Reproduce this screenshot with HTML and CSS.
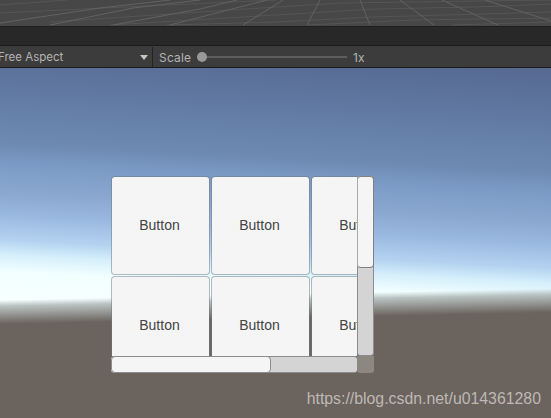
FILE: index.html
```html
<!DOCTYPE html>
<html lang="en">
<head>
<meta charset="utf-8">
<title>Game view</title>
<link rel="stylesheet" href="styles.css">
</head>
<body>
<div class="scene">
  <svg class="grid" width="551" height="26" viewBox="0 0 551 26" aria-hidden="true">
    <g class="grid-h">
      <path d="M0 5L67 0"/>
      <path d="M0 13L167 5L276 0"/>
      <path d="M50 22L276 7L342 3L551 0"/>
      <path d="M110 25L276 15L375 9L475 7L551 4"/>
      <path d="M167 25L276 22L375 17L482 14L551 12"/>
      <path d="M308 25L412 20L551 18"/>
      <path d="M452 25L551 22"/>
    </g>
    <g class="grid-v">
      <path d="M0 23L100 8L170 0"/>
      <path d="M50 25L133 8L200 0"/>
      <path d="M113 25L200 9L237 0"/>
      <path d="M170 25L267 0"/>
      <path d="M243 25L283 0"/>
      <path d="M307 25L320 0"/>
      <path d="M370 25L360 0"/>
      <path d="M434 25L400 0"/>
      <path d="M498 25L442 0"/>
      <path d="M551 21L485 0"/>
    </g>
  </svg>
</div>
<div class="tabbar"></div>
<div class="toolbar">
  <div class="aspect">
    <span class="aspect-label">Free Aspect</span>
    <span class="caret"></span>
  </div>
  <div class="scale">
    <span class="scale-label">Scale</span>
    <div class="slider"><span class="slider-knob"></span></div>
    <span class="scale-value">1x</span>
  </div>
</div>
<main class="game">
  <div class="scrollview">
    <div class="viewport">
      <div class="cells">
        <button class="cell">Button</button>
        <button class="cell">Button</button>
        <button class="cell">Button</button>
        <button class="cell">Button</button>
        <button class="cell">Button</button>
        <button class="cell">Button</button>
      </div>
    </div>
    <div class="vbar"><span class="vthumb"></span></div>
    <div class="hbar"><span class="hthumb"></span></div>
    <div class="corner"></div>
  </div>
  <span class="watermark">https://blog.csdn.net/u014361280</span>
</main>
</body>
</html>
```

FILE: styles.css
```css
* { box-sizing: border-box; }
html, body { margin: 0; height: 100%; }
body {
  width: 551px;
  height: 418px;
  overflow: hidden;
  display: flex;
  flex-direction: column;
  font-family: "Inter", "Liberation Sans", sans-serif;
  background: #282828;
}
.scene { flex: none; height: 27px; background: #474747; border-bottom: 1px solid #1f1f1f; }
.grid { display: block; }
.grid path { fill: none; stroke-width: 1; }
.grid-h path { stroke: #555555; }
.grid-v path { stroke: #626262; }
.tabbar { flex: none; height: 19px; background: #282828; border-bottom: 1px solid #1c1c1c; }
.toolbar {
  flex: none;
  height: 22px;
  display: flex;
  align-items: center;
  padding-top: 1px;
  background: #3c3c3c;
  border-bottom: 1px solid #1a1a1a;
  color: #b4b4b4;
  font-size: 12px;
  letter-spacing: 0.2px;
}
.aspect {
  width: 153px;
  height: 100%;
  display: flex;
  align-items: center;
  justify-content: space-between;
  padding-right: 4px;
  border-right: 1px solid #232323;
  overflow: hidden;
}
.aspect-label { margin-left: -2px; font-size: 11.500px; letter-spacing: 0; }
.caret {
  width: 0;
  height: 0;
  border-left: 4px solid transparent;
  border-right: 4px solid transparent;
  border-top: 5px solid #c4c4c4;
}
.scale { display: flex; align-items: center; padding-left: 6px; }
.scale-label { width: 38px; }
.slider { position: relative; width: 150px; height: 2px; background: #5e5e5e; }
.slider-knob {
  position: absolute;
  left: 0;
  top: -4px;
  width: 10px;
  height: 10px;
  border-radius: 50%;
  background: #999999;
}
.scale-value { margin-left: 6px; }
.game {
  flex: 1;
  position: relative;
  padding: 108px 0 0 111px;
  background:
    linear-gradient(178.800deg, rgba(107,99,94,0) 232px, rgba(160,170,168,0.7) 238px, #6b635e 256px),
    linear-gradient(183deg, #566a92 4px, #6d8ab3 104px, #7b9bc6 125px, #8aa8d0 154px, #99b8df 175px, #b4d2f0 200px, #d5effb 215px, #f2ffff 232px, #f7ffff 260px);
}
.scrollview {
  width: 263px;
  height: 198px;
  display: grid;
  grid-template-columns: 246px 17px;
  grid-template-rows: 180px 18px;
}
.viewport { overflow: hidden; }
.cells {
  width: 300px;
  display: grid;
  grid-template-columns: repeat(3, 97px);
  grid-auto-rows: 96.500px;
  gap: 3.500px 3px;
  padding: 1px 0 0 1px;
}
.cell {
  border: 0;
  padding: 0 2px 0 0;
  border-radius: 3px;
  background: #f5f5f5;
  color: #444444;
  font-family: "Liberation Sans", sans-serif;
  font-size: 14px;
  box-shadow: 0 0 0 1px rgba(110,120,125,0.5);
}
.vbar {
  height: 180px;
  background: #d4d4d4;
  border: 1px solid #8c8c8c;
  border-top: 0;
  border-radius: 3px;
}
.vthumb {
  display: block;
  height: 92px;
  margin: 0 -1px;
  background: #f5f5f5;
  border: 1px solid #808080;
  border-left-color: #aaaaaa;
  border-radius: 4px;
}
.hbar {
  height: 17px;
  background: #d4d4d4;
  border-top: 1px solid #8c8c8c;
  border-bottom: 1px solid #8c8c8c;
  border-radius: 3px;
}
.hthumb {
  display: block;
  width: 160px;
  height: 17px;
  margin-top: -1px;
  background: #f5f5f5;
  border: 1px solid #8c8c8c;
  border-radius: 4px;
}
.corner { height: 17px; background: #8d8781; border-radius: 0 0 3px 3px; }
.watermark {
  position: absolute;
  right: 10px;
  bottom: 10px;
  font-family: "Liberation Sans", sans-serif;
  font-size: 15.850px;
  color: #bdb9b4;
}
```
